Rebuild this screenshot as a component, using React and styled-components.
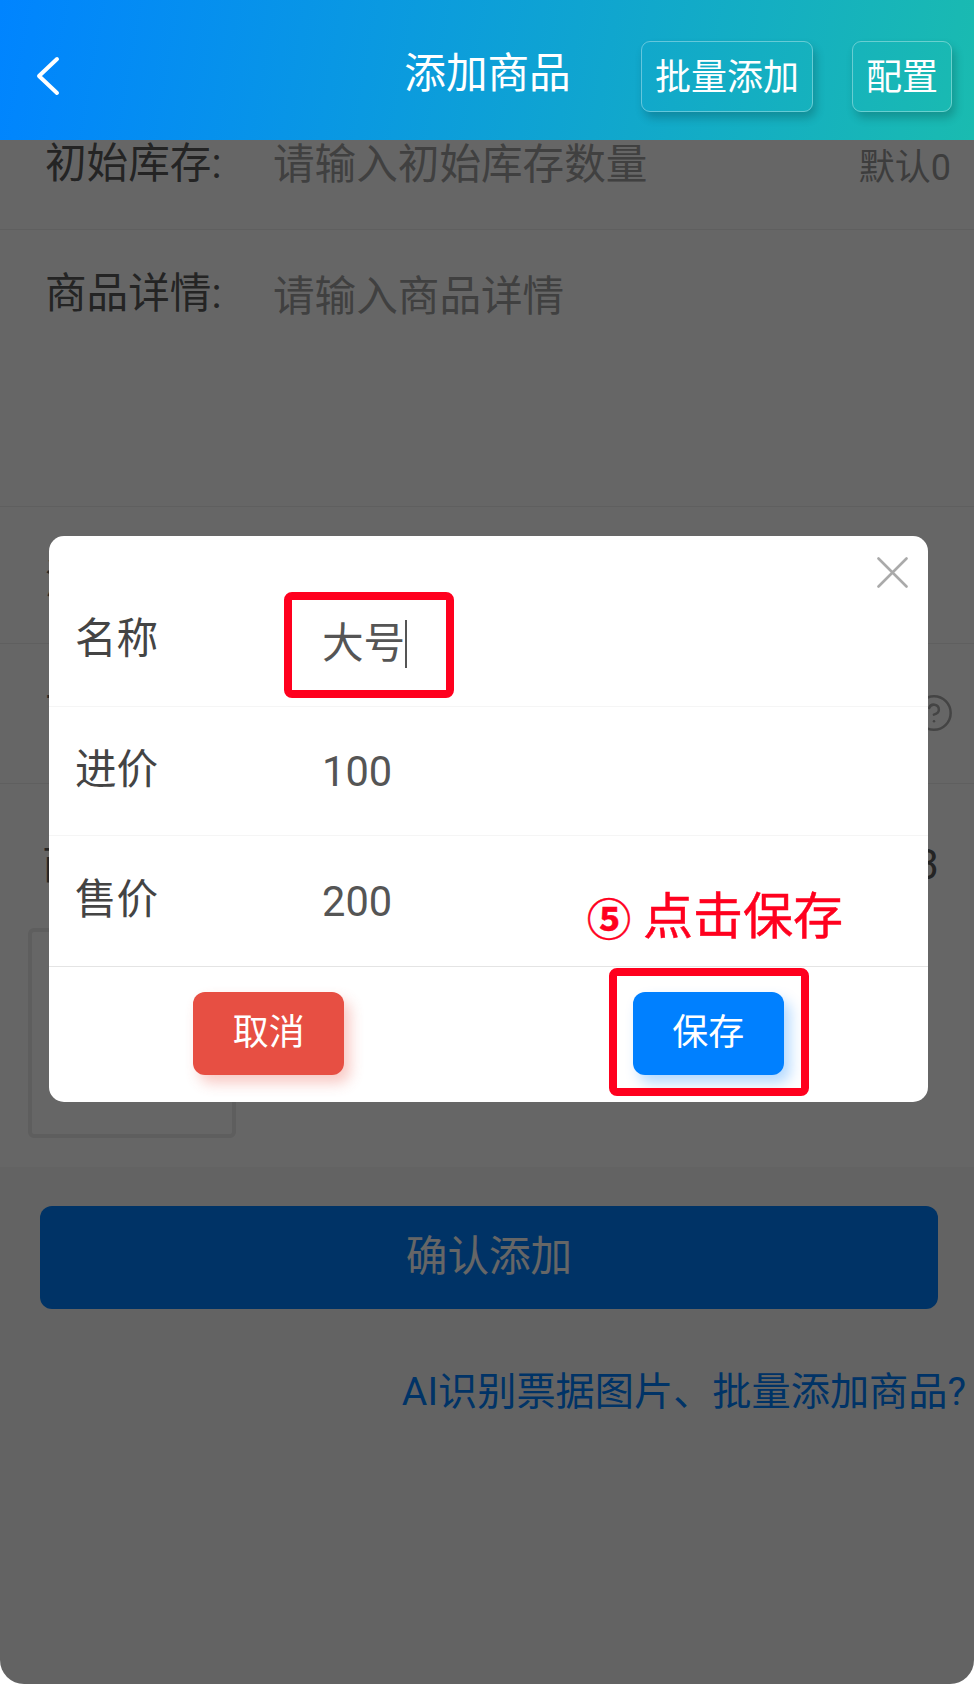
import React from "react";
import styled, { createGlobalStyle } from "styled-components";
import { CircleHelp } from "lucide-react";

const App = () => {
    return (
        <Page>
            <GlobalStyle />
            <Header>
                <BackButton>
                    <svg width="24" height="40" viewBox="0 0 24 40" fill="none">
                        <polyline points="21,3 3,20 21,37" stroke="#fff" strokeWidth="4" strokeLinecap="round" strokeLinejoin="round" />
                    </svg>
                </BackButton>
                <Title>添加商品</Title>
                <Actions>
                    <HeaderButton>批量添加</HeaderButton>
                    <HeaderButton>配置</HeaderButton>
                </Actions>
            </Header>

            <Row $height={90} $pad={0}>
                <Label>初始库存:</Label>
                <Placeholder $shift={1}>请输入初始库存数量</Placeholder>
                <Hint>默认0</Hint>
            </Row>
            <Row $height={277} $pad={40}>
                <Label>商品详情:</Label>
                <Placeholder $shift={3}>请输入商品详情</Placeholder>
            </Row>
            <Row $height={137} $pad={49}>
                <Label>添加规格:</Label>
            </Row>
            <Row $height={140} $pad={45}>
                <Label>下限预警:</Label>
                <HelpIcon>
                    <CircleHelp size={40} strokeWidth={1.5} color="#aaa" />
                </HelpIcon>
            </Row>

            <ImageSection>
                <ImageHead>
                    <span>商品图片</span>
                    <span>0/3</span>
                </ImageHead>
                <ImageBox />
            </ImageSection>

            <Footer>
                <ConfirmButton>确认添加</ConfirmButton>
                <AiLink>AI识别票据图片、批量添加商品?</AiLink>
            </Footer>

            <Backdrop />

            <Modal>
                <CloseIcon width="31" height="31" viewBox="0 0 31 31">
                    <path d="M1.5 1.5 L29.5 29.5 M29.5 1.5 L1.5 29.5" stroke="#aaa" strokeWidth="2.6" strokeLinecap="round" />
                </CloseIcon>
                <ModalRow $pad={79} $height={171}>
                    <ModalLabel>名称</ModalLabel>
                    <ModalValue $shift={5}>大号<Caret /></ModalValue>
                </ModalRow>
                <ModalRow $pad={39} $height={129}>
                    <ModalLabel>进价</ModalLabel>
                    <ModalValue $shift={2}>100</ModalValue>
                </ModalRow>
                <ModalRow $pad={40} $height={131} $last>
                    <ModalLabel>售价</ModalLabel>
                    <ModalValue $shift={2}>200</ModalValue>
                </ModalRow>
                <ModalFooter>
                    <ModalButton $color="#e74f43" $shadow="rgba(231,76,60,.3)">取消</ModalButton>
                    <ModalButton $color="#0080ff" $shadow="rgba(0,128,255,.3)">保存</ModalButton>
                </ModalFooter>

                <Callout $left={235} $top={56} $width={170} $height={106} />
                <Callout $left={560} $top={432} $width={200} $height={128} />
                <Note>
                    <NoteNum>⑤</NoteNum>
                    <span>点击保存</span>
                </Note>
            </Modal>
        </Page>
    )
}

export default App;

const GlobalStyle = createGlobalStyle`
html, body {
    margin: 0;
    padding: 0;
    background: #fff;
}
* {
    box-sizing: border-box;
}
`;

const Page = styled.div`
position: relative;
width: 974px;
height: 1684px;
overflow: hidden;
display: flex;
flex-direction: column;
background: #f8f8f8;
border-radius: 0 0 24px 24px;
font-family: Roboto, "Noto Sans CJK SC", sans-serif;
`;

const Header = styled.div`
position: relative;
z-index: 3;
flex: none;
height: 140px;
padding: 13px 22px 0 23px;
display: grid;
grid-template-columns: 1fr auto 1fr;
align-items: center;
background: linear-gradient(100deg, #0084ff 0%, #1abbb0 100%);
`;

const BackButton = styled.div`
display: flex;
align-items: center;
margin: -2px 0 0 13px;
`;

const Title = styled.div`
margin-top: -5px;
font-size: 41.6px;
line-height: 48px;
color: #fff;
`;

const Actions = styled.div`
display: flex;
justify-content: flex-end;
gap: 39px;
`;

const HeaderButton = styled.div`
height: 71px;
padding: 0 13px 6px;
display: flex;
align-items: center;
font-size: 36px;
color: #fff;
border: 1px solid rgba(255, 255, 255, .35);
border-radius: 9px;
box-shadow: 3px 6px 10px rgba(0, 0, 0, .2);
`;

const Row = styled.div`
flex: none;
height: ${props => props.$height}px;
padding: ${props => props.$pad}px 23px 0 45px;
display: flex;
align-items: flex-start;
background: #fff;
border-bottom: 1px solid #eee;
`;

const Label = styled.div`
width: 228px;
flex: none;
font-size: 41.6px;
line-height: 48px;
color: #5a5a5a;
`;

const Placeholder = styled.div`
margin-top: ${props => props.$shift}px;
font-size: 41.6px;
line-height: 48px;
color: #a0a0a0;
`;

const Hint = styled.div`
margin-left: auto;
margin-top: 4px;
font-size: 36px;
line-height: 48px;
color: #999;
`;

const HelpIcon = styled.div`
margin: 4px -3px 0 auto;
display: flex;
`;

const ImageSection = styled.div`
flex: none;
height: 383px;
padding: 57px 35px 0 28px;
background: #fff;
`;

const ImageHead = styled.div`
margin-left: 14px;
display: flex;
justify-content: space-between;
font-size: 41.6px;
line-height: 48px;
color: #5a5a5a;
`;

const ImageBox = styled.div`
width: 208px;
height: 210px;
margin-top: 39px;
border: 4px solid #eaeaea;
border-radius: 6px;
`;

const Footer = styled.div`
flex: 1;
padding: 39px 8px 0 40px;
`;

const ConfirmButton = styled.div`
width: 898px;
height: 103px;
padding-bottom: 10px;
display: flex;
align-items: center;
justify-content: center;
font-size: 41.6px;
color: #fff;
background: #0080ff;
border-radius: 12px;
`;

const AiLink = styled.div`
margin-top: 59px;
font-size: 39.2px;
line-height: 48px;
text-align: right;
white-space: nowrap;
color: #0080ff;
`;

const Backdrop = styled.div`
position: absolute;
inset: 0;
z-index: 1;
background: rgba(0, 0, 0, .6);
`;

const Modal = styled.div`
position: absolute;
z-index: 2;
left: 49px;
top: 536px;
width: 879px;
height: 566px;
background: #fff;
border-radius: 15px;
`;

const CloseIcon = styled.svg`
position: absolute;
top: 21px;
right: 20px;
`;

const ModalRow = styled.div`
height: ${props => props.$height}px;
padding: ${props => props.$pad}px 0 0 26px;
display: flex;
align-items: flex-start;
border-bottom: 1px solid ${props => props.$last ? "#e4e4e4" : "#f5f5f5"};
`;

const ModalLabel = styled.div`
width: 247px;
font-size: 41.6px;
line-height: 48px;
color: #444;
`;

const ModalValue = styled.div`
margin-top: ${props => props.$shift}px;
display: flex;
align-items: center;
font-size: 41.6px;
line-height: 48px;
color: #555;
`;

const Caret = styled.span`
width: 2px;
height: 48px;
background: #555;
`;

const ModalFooter = styled.div`
height: 135px;
display: flex;
justify-content: space-around;
padding-top: 25px;
`;

const ModalButton = styled.div`
width: 151px;
height: 83px;
padding-bottom: 10px;
display: flex;
align-items: center;
justify-content: center;
font-size: 36px;
color: #fff;
background: ${props => props.$color};
border-radius: 12px;
box-shadow: 6px 8px 14px ${props => props.$shadow};
`;

const Callout = styled.div`
position: absolute;
left: ${props => props.$left}px;
top: ${props => props.$top}px;
width: ${props => props.$width}px;
height: ${props => props.$height}px;
border: 8px solid #ff001e;
border-radius: 8px;
`;

const Note = styled.div`
position: absolute;
left: 538px;
top: 351px;
display: flex;
align-items: center;
gap: 12px;
font-size: 50px;
line-height: 60px;
color: #ff001e;
white-space: nowrap;
-webkit-text-stroke: .5px #ff001e;
`;

const NoteNum = styled.span`
font-family: "Noto Sans CJK SC", sans-serif;
font-size: 44px;
font-weight: 700;
`;
